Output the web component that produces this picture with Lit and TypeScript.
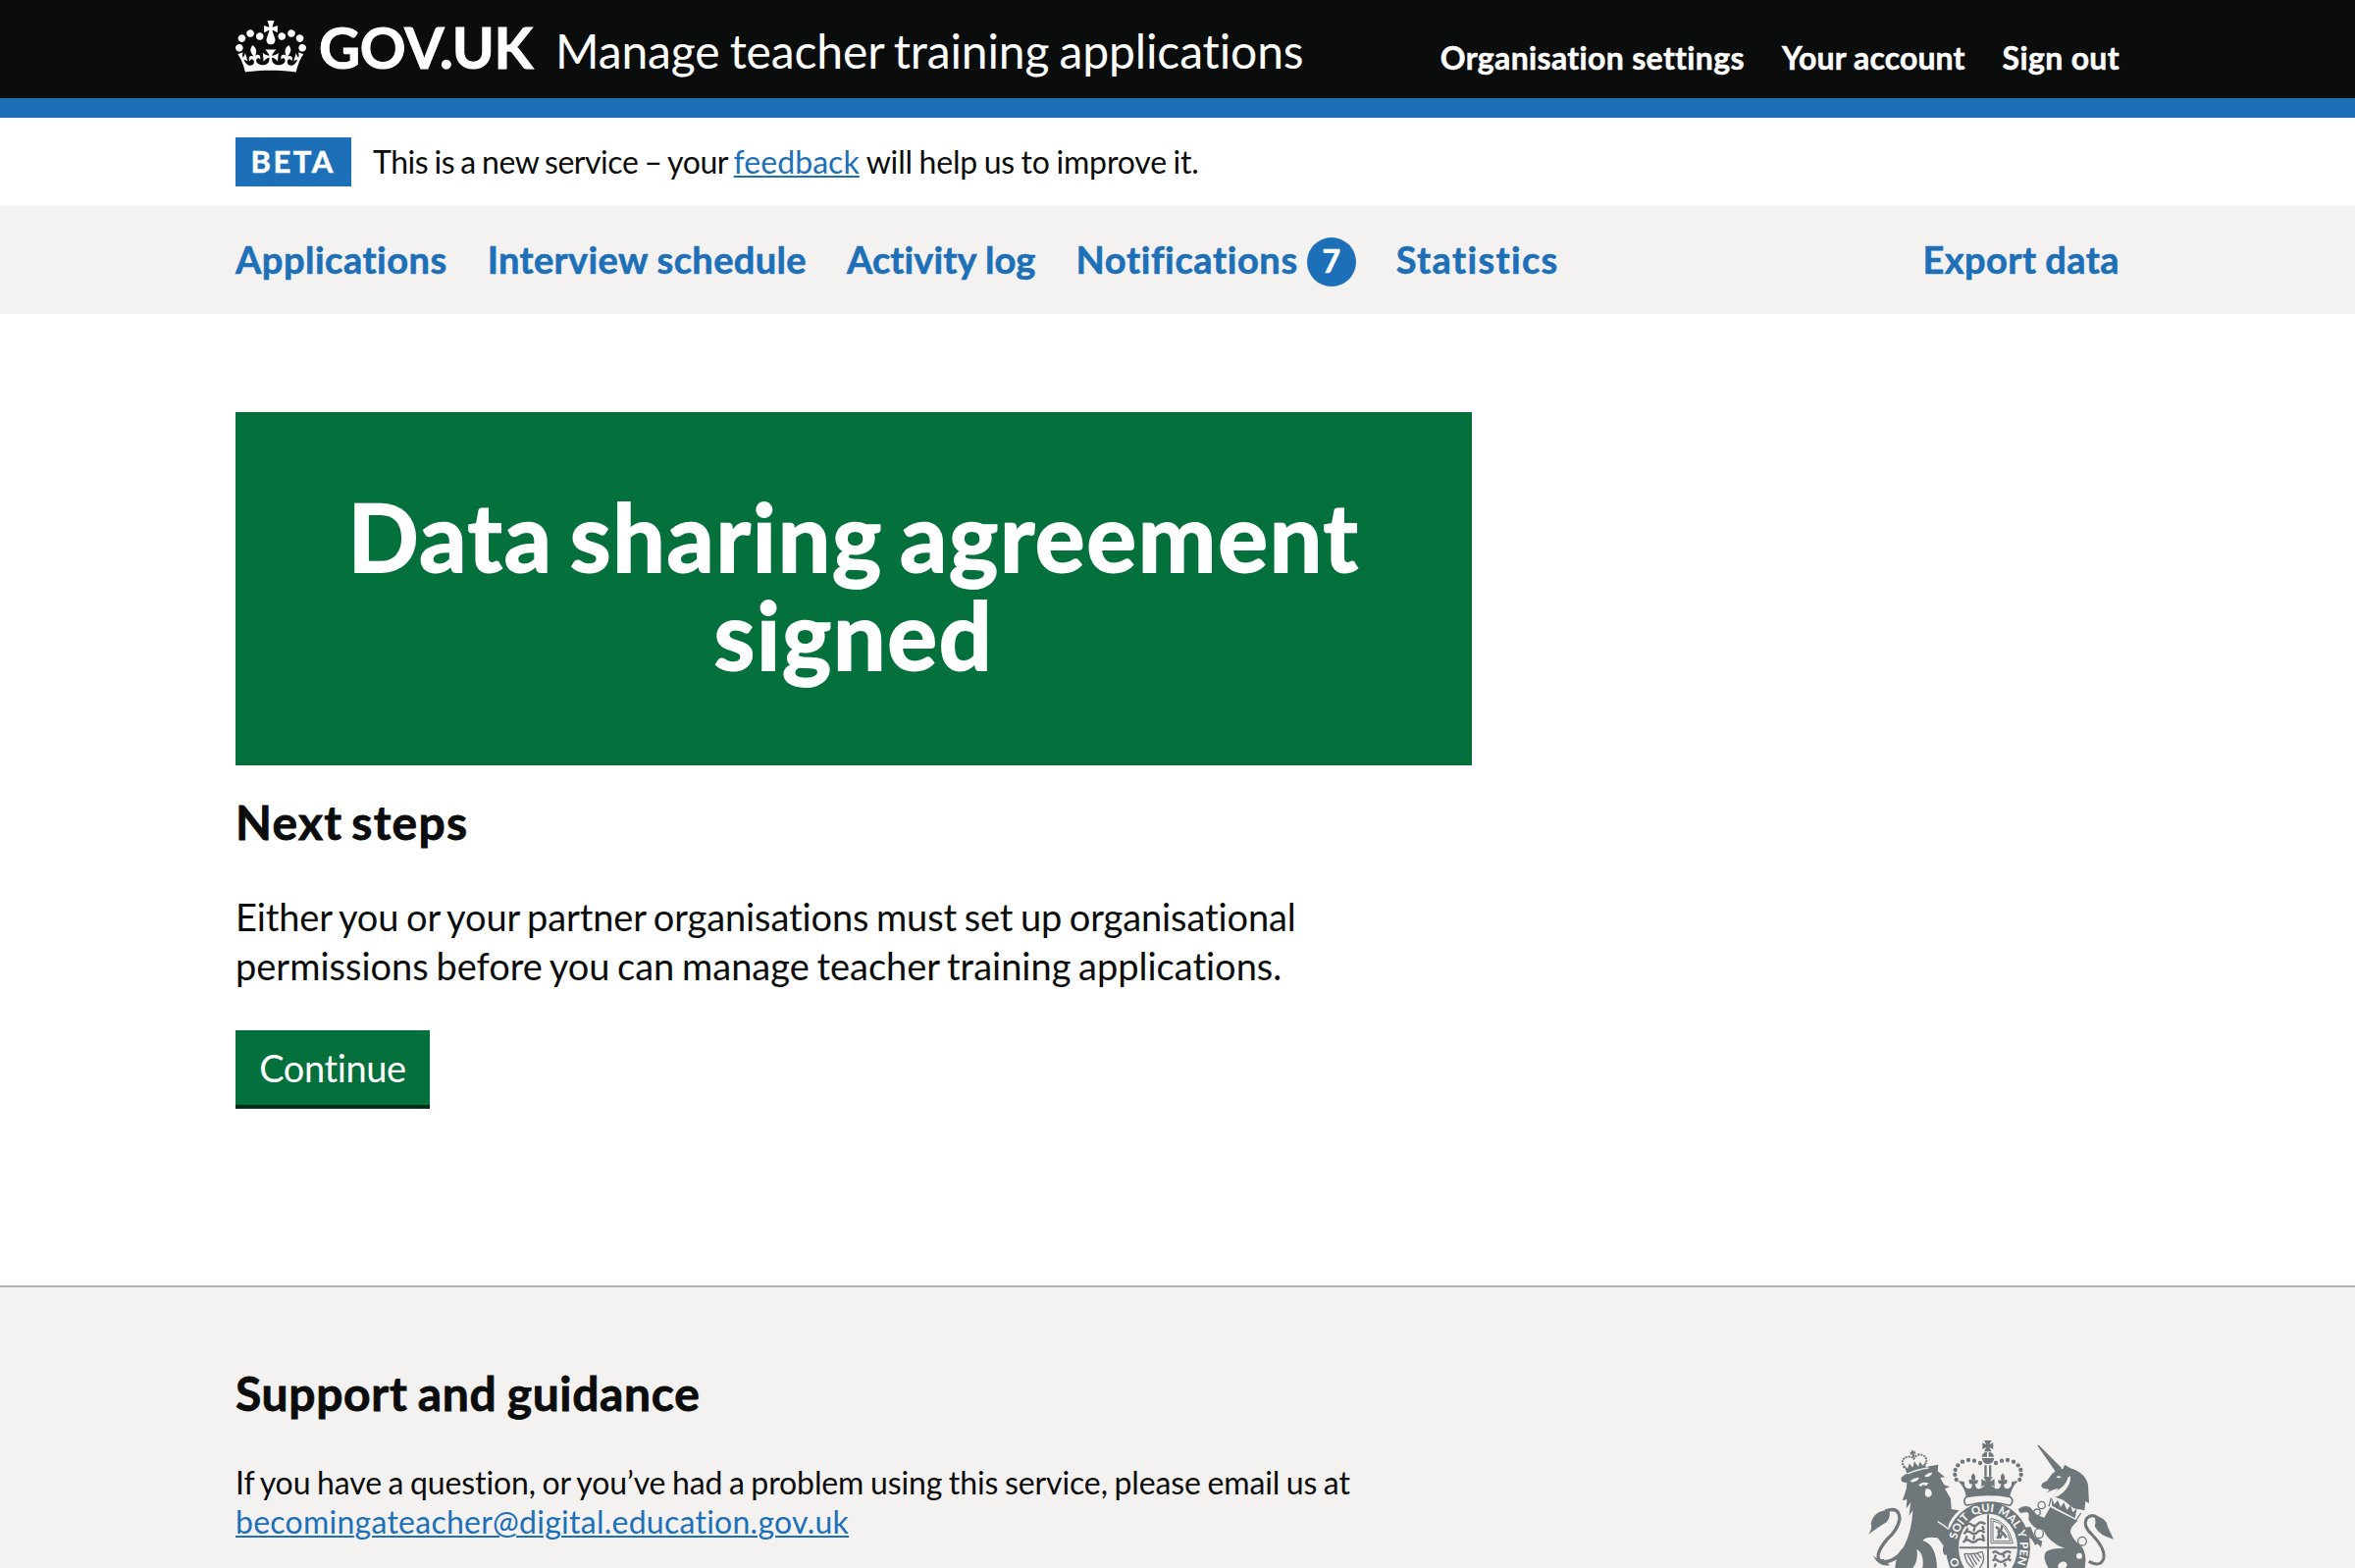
import { LitElement, html, css, svg } from 'lit';
import { customElement, property } from 'lit/decorators.js';

@customElement('crown-logo')
class CrownLogo extends LitElement {
  static styles = css`
    :host { display: block; width: 72px; height: 53px; }
    .crown { display: block; width: 100%; height: 100%; fill: #fff; }
  `;
  render() {
    return html`<svg class="crown" viewBox="0 0 132 97" aria-hidden="true"><path fill-rule="evenodd" d="M25 30.2c3.5 1.5 7.7-.2 9.1-3.7 1.5-3.6-.2-7.8-3.9-9.2-3.6-1.4-7.6.3-9.1 3.9-1.4 3.5.3 7.5 3.9 9zM9 39.5c3.6 1.5 7.8-.2 9.2-3.7 1.5-3.6-.2-7.8-3.9-9.1-3.6-1.5-7.6.2-9.1 3.8-1.4 3.5.3 7.5 3.8 9zM4.4 57.2c3.5 1.5 7.7-.2 9.1-3.8 1.5-3.6-.2-7.7-3.9-9.1-3.5-1.5-7.6.3-9.1 3.8-1.4 3.5.3 7.6 3.9 9.1zm38.3-21.4c3.5 1.5 7.7-.2 9.1-3.8 1.5-3.6-.2-7.7-3.9-9.1-3.6-1.5-7.6.3-9.1 3.8-1.3 3.6.4 7.7 3.9 9.1zm64.4-5.6c-3.6 1.5-7.8-.2-9.1-3.7-1.5-3.6.2-7.8 3.8-9.2 3.6-1.4 7.7.3 9.2 3.9 1.3 3.5-.4 7.5-3.9 9zm15.9 9.3c-3.6 1.5-7.7-.2-9.1-3.7-1.5-3.6.2-7.8 3.7-9.1 3.6-1.5 7.7.2 9.2 3.8 1.5 3.5-.3 7.5-3.8 9zm4.7 17.7c-3.6 1.5-7.8-.2-9.2-3.8-1.5-3.6.2-7.7 3.9-9.1 3.6-1.5 7.7.3 9.2 3.8 1.3 3.5-.4 7.6-3.9 9.1zM89.3 35.8c-3.6 1.5-7.8-.2-9.2-3.8-1.4-3.6.2-7.7 3.9-9.1 3.6-1.5 7.7.3 9.2 3.8 1.4 3.6-.3 7.7-3.9 9.1zM69.7 17.7l8.9 4.7V9.3l-8.9 2.8c-.2-.3-.5-.6-.9-.9L72.4 0H59.6l3.5 11.2c-.3.3-.6.5-.9.9l-8.8-2.8v13.1l8.8-4.7c.3.3.6.7.9.9l-5 15.4v.1c-.2.8-.4 1.6-.4 2.4 0 4.1 3.1 7.5 7 8.1h.2c.3 0 .7.1 1 .1.4 0 .7 0 1-.1h.2c4-.6 7.1-4.1 7.1-8.1 0-.8-.1-1.7-.4-2.4V34l-5.1-15.4c.4-.2.7-.6 1-.9zM66 92.8c16.9 0 32.8 1.1 47.1 3.2 4-16.9 8.9-26.7 14-33.5l-9.6-3.4c1 4.9 1.1 7.2 0 10.2-1.5-1.4-3-4.3-4.2-8.7L108.6 76c2.8-2 5-3.2 7.5-3.3-4.4 9.4-10 11.9-13.6 11.2-4.3-.8-6.3-4.6-5.6-7.9 1-4.7 5.7-5.9 8-.5 4.3-8.7-3-11.4-7.6-8.8 7.1-7.2 7.9-13.5 2.1-21.1-8 6.1-8.1 12.3-4.5 20.8-4.7-5.4-12.1-2.5-9.5 6.2 3.4-5.2 7.9-2 7.2 3.1-.6 4.3-6.4 7.8-13.5 7.2-10.3-.9-10.9-8-11.2-13.8 2.5-.5 7.1 1.8 11 7.3L80.2 60c-4.1 4.4-8 5.3-12.3 5.4 1.4-4.4 8-11.6 8-11.6H55.5s6.4 7.2 7.9 11.6c-4.2-.1-8-1-12.3-5.4l1.4 16.4c3.9-5.5 8.5-7.7 10.9-7.3-.3 5.8-.9 12.8-11.1 13.8-7.2.6-12.9-2.9-13.5-7.2-.7-5 3.8-8.3 7.1-3.1 2.7-8.7-4.6-11.6-9.4-6.2 3.7-8.5 3.6-14.7-4.6-20.8-5.8 7.6-5 13.9 2.2 21.1-4.7-2.6-11.9.1-7.7 8.8 2.3-5.5 7.1-4.2 8.1.5.7 3.3-1.3 7.1-5.7 7.9-3.5.7-9-1.8-13.5-11.2 2.5.1 4.7 1.3 7.5 3.3l-4.7-15.4c-1.2 4.4-2.7 7.2-4.3 8.7-1.1-3-.9-5.3 0-10.2l-9.5 3.4c5 6.9 9.9 16.7 14 33.5 14.8-2.1 30.8-3.2 47.7-3.2z"/></svg>`;
  }
}

/** Left half of the crown's pearls; the right half is mirrored about x = 438. */
const PEARLS = [[414, 123], [396, 116], [378, 114], [360, 119], [346, 130], [338, 144], [337, 159], [341, 174]];

/** Words of the garter motto and where each starts along the ring. */
const MOTTO: [string, number][] = [['O', 10], ['SOIT', 90], ['QUI', 181], ['MAL', 257], ['Y', 341], ['PEN', 374]];

@customElement('royal-arms')
class RoyalArms extends LitElement {
  static styles = css`
    :host { display: block; width: 260px; height: 148px; }
    .arms { display: block; width: 100%; height: 100%; }
    .ink { fill: #6f777b; stroke-linejoin: round; }
    .pale { fill: #f3f2f1; }
    .line { fill: none; stroke: #6f777b; }
    .motto { fill: #f3f2f1; font: 900 34px Lato, sans-serif; letter-spacing: 0.3px; }
  `;
  render() {
    return html`<svg class="arms" viewBox="60 0 780 444" aria-hidden="true">
<g class="ink">
<path d="M588 68 L594 69 L663 138 L649 156 Z"/>
<path d="M601 194 Q601 184 618 178 L634 156 Q648 142 668 140 L672 128 L690 139 Q735 152 744 190 L747 246 L736 240 L733 268 L700 262 L668 236 L640 226 L652 200 L630 208 L618 214 L626 204 L606 200Z"/>
<path class="pale" d="M690 162 Q692 190 668 212 Q652 226 640 228 Q640 218 650 206 Q676 194 682 168Z"/>
<path class="pale" d="M646 166 q8 -6 16 0 q-6 6 -16 0z"/>
<path d="M632 228 L641 250 L651 236 L660 258 L670 244 L679 267 L690 252 L697 274 L710 262 L704 292 L634 254Z"/>
<path class="line" stroke-width="4" d="M631 230 L624 256 M722 276 L706 300"/>
<path d="M628 258 L712 300 Q690 318 690 334 Q698 360 722 376 Q742 400 734 444 L676 444 Q686 428 668 424 Q650 428 652 444 L622 444 Q602 408 616 394 Q632 382 672 384 Q624 366 606 326 Q580 330 562 296 Q566 268 552 274 L536 276 L530 264 Q548 250 566 258 L588 282 L610 290Z"/>
<path d="M552 320 L568 318 L582 350 L604 362 L600 382 L590 370 L582 374 L572 356 L556 346 L540 352Z"/>
<g class="line" stroke-width="4"><circle cx="602" cy="252" r="11"/><circle cx="588" cy="274" r="10"/><ellipse cx="594" cy="338" rx="13" ry="15"/><circle cx="726" cy="362" r="13"/></g>
<circle class="pale" cx="717" cy="407" r="9"/>
<path class="line" stroke-width="9" d="M776 292 Q756 276 740 292 Q726 316 758 344 Q796 384 792 412 Q784 444 746 424"/>
<path d="M762 284 Q800 288 804 318 L822 356 Q778 346 764 316 Q770 300 762 284Z"/>
<path class="line" stroke-width="10" d="M124 270 Q166 254 168 294 Q162 328 128 358 Q92 402 106 420 Q134 436 172 400"/>
<path d="M72 342 Q86 322 80 308 Q88 268 136 266 Q142 286 128 304 Q104 318 72 342Z M86 406 Q100 420 118 416 L138 436 Q104 442 86 406Z"/>
<path d="M172 168 L184 158 Q220 142 262 132 L286 128 L284 148 L306 166 L292 168 L304 190 L321 196 L306 202 L324 232 L326 264 L350 268 Q322 292 316 318 L338 356 Q350 380 343 410 L330 404 L326 412 L316 398 L306 406 Q296 396 302 376 L284 352 Q250 346 238 360 Q280 372 282 444 L238 444 Q244 400 220 386 Q226 420 208 444 L154 444 Q156 400 180 380 Q206 330 208 268 L196 284 L202 244 L188 262 L190 234 L176 238 L188 204 L190 184 L174 180Z"/>
<path class="pale" d="M200 178 Q214 166 228 168 Q222 180 206 182Z M244 162 Q254 152 268 152 Q264 164 248 166Z M226 190 Q236 178 256 184 L250 192 L238 190 L232 196Z M248 202 Q268 200 266 220 Q256 234 246 222 Q244 212 248 202Z"/>
<path fill="none" stroke="#f3f2f1" stroke-width="4" d="M284 302 Q304 314 318 326"/>
<g transform="rotate(-10 213 120)"><path d="M184 149 L180 124 L189 136 L197 122 L205 136 L213 118 L222 136 L230 122 L237 136 L247 124 L243 149Z M208 84 h10 l-3 6 6 -3 v10 l-6 -3 3 10 h-10 l3 -10 -6 3 v-10 l6 3z"/><path class="line" stroke-width="6" stroke-dasharray="6 3" d="M180 132 Q168 104 196 100 Q208 102 213 110 Q218 102 230 100 Q258 104 247 132"/></g>
<path fill="none" stroke="#f3f2f1" stroke-width="4" d="M192 156 Q222 142 256 138"/>
<path d="M426 54 h23 l-7 13 12 -6 v20 l-12 -6 7 13 h-23 l7 -13 -12 6 v-20 l12 6z"/>
<path d="M419 104 a19 16 0 0 1 16 -15 v15z M440 89 a19 16 0 0 1 16 15 h-16z M419 108 h38 q-4 18 -19 18 q-15 0 -19 -18z M427 130 h7 v34 h-7z M441 130 h7 v34 h-7z"/>
${PEARLS.map(([x, y]) => svg`<circle cx=${x} cy=${y} r="6.5"/><circle cx=${876 - x} cy=${y} r="6.5"/>`)}
<path d="M372 228 Q366 196 346 178 L366 180 Q364 198 378 202 Q392 202 388 186 Q378 190 380 174 Q386 172 390 178 Q382 166 393 154 Q404 166 396 178 Q402 172 408 176 Q406 190 398 186 Q400 204 412 202 Q424 198 430 190 L418 196 V172 L432 180 L424 165 H452 L444 180 L458 172 V196 L446 190 Q452 198 464 202 Q476 204 478 186 Q470 190 468 176 Q474 172 480 178 Q472 166 483 154 Q494 166 486 178 Q490 172 496 174 Q498 190 488 186 Q484 202 498 202 Q512 198 510 180 L530 178 Q510 196 504 228 Q438 216 372 228Z"/>
<ellipse cx="438" cy="382" rx="129" ry="140"/>
<path class="pale" stroke="#6f777b" stroke-width="5" d="M372 226 Q438 214 504 226 Q514 232 512 242 Q508 254 500 252 Q438 234 376 252 Q368 254 366 242 Q364 232 372 226Z"/>
<ellipse class="pale" cx="438" cy="382" rx="90" ry="104"/>
<path class="line" stroke-width="6" d="M438 280 V444 M350 382 H527"/>
<path id="ring" fill="none" d="M357 444 A98 110 0 1 1 519 444"/>
${MOTTO.map(([word, at]) => svg`<text class="motto"><textPath href="#ring" startOffset=${at}>${word}</textPath></text>`)}
<g class="line" stroke-width="7"><path d="M370 316 q8 -14 18 -4 q10 8 20 -4 q10 -8 22 2 M364 340 q10 -14 22 -4 q12 8 22 -4 q10 -6 20 4 M362 366 q10 -14 22 -4 q12 8 22 -4 q10 -6 22 4 M376 322 l-6 12 M398 318 l-4 14 M420 316 l6 12 M374 346 l-6 14 M396 344 l-2 14 M420 342 l6 14"/>
<path d="M452 398 q8 -8 16 0 q10 8 22 -2 q10 -6 18 2 M452 422 q8 -8 16 0 q10 8 22 -2 q10 -6 18 2 M462 404 l-4 10 M484 402 l4 10 M504 404 l-4 12 M462 430 l-4 12 M488 428 l4 12"/>
<path stroke-width="3" d="M447 292 Q500 300 514 368 H447Z M453 300 Q496 308 506 362 H453Z"/>
<path d="M466 354 q8 -12 4 -22 q12 -4 10 -18 M470 330 q16 4 24 22 M480 340 l-6 14 M462 318 l10 8"/>
<path stroke-width="4" d="M366 400 Q396 404 420 394 Q432 420 412 444 M366 400 Q370 430 392 444 M376 404 L396 440 M386 404 L404 434 M396 402 L412 424 M406 400 L418 414"/></g>
</g></svg>`;
  }
}

@customElement('service-header')
class ServiceHeader extends LitElement {
  static styles = css`
    :host { display: block; background: #0b0c0c; border-bottom: 20px solid #1d70b8; color: #fff; }
    .bar { box-sizing: border-box; width: 1920px; height: 100px; margin: 0 auto; display: flex; align-items: flex-start; white-space: nowrap; }
    .crown { padding-top: 21px; }
    .brand { padding: 18px 0 0 13px; font-size: 58px; line-height: 60px; font-weight: 700; letter-spacing: -0.24px; -webkit-text-stroke: 1px currentColor; }
    .service { padding: 22px 0 0 23px; font-size: 48px; line-height: 60px; letter-spacing: -0.13px; word-spacing: -2px; }
    .links { margin-left: auto; padding-top: 39px; display: flex; gap: 38px; font-size: 32px; line-height: 40px; font-weight: 700; letter-spacing: 0.34px; -webkit-text-stroke: 0.5px currentColor; }
    .account { letter-spacing: 0.12px; }
  `;
  render() {
    return html`<div class="bar">
      <crown-logo class="crown"></crown-logo>
      <div class="brand">GOV.UK</div>
      <div class="service">Manage teacher training applications</div>
      <nav class="links"><span>Organisation settings</span><span class="account">Your account</span><span>Sign out</span></nav>
    </div>`;
  }
}

@customElement('phase-banner')
class PhaseBanner extends LitElement {
  static styles = css`
    :host { display: block; background: #fff; }
    .row { box-sizing: border-box; width: 1920px; height: 90px; margin: 0 auto; padding-top: 20px; display: flex; align-items: flex-start; gap: 22px; white-space: nowrap; }
    .tag { box-sizing: border-box; width: 118px; height: 50px; padding-left: 15.6px; background: #1d70b8; color: #fff; font-size: 31px; line-height: 49px; font-weight: 700; letter-spacing: 2.5px; -webkit-text-stroke: 0.5px currentColor; }
    .text { padding-top: 5px; font-size: 32px; line-height: 40px; letter-spacing: -0.45px; word-spacing: -1.5px; }
    .link { color: #1d70b8; letter-spacing: 0.05px; text-decoration: underline 2px; text-underline-offset: 2px; }
    .rest { letter-spacing: -0.15px; margin-left: 1px; }
  `;
  render() {
    return html`<div class="row">
      <strong class="tag">BETA</strong>
      <div class="text">This is a new service – your <a class="link">feedback</a><span class="rest"> will help us to improve it.</span></div>
    </div>`;
  }
}

@customElement('primary-nav')
class PrimaryNav extends LitElement {
  @property({ type: Number }) count = 7;
  static styles = css`
    :host { display: block; background: #f3f2f1; }
    .row { box-sizing: border-box; width: 1920px; height: 110px; margin: 0 auto; padding-top: 29px; display: flex; align-items: flex-start; gap: 41px; color: #1d70b8; font-size: 38px; line-height: 50px; font-weight: 700; white-space: nowrap; letter-spacing: 0.5px; -webkit-text-stroke: 0.6px currentColor; }
    .even { letter-spacing: 0.36px; }
    .tight { letter-spacing: 0.1px; }
    .alerts { display: flex; gap: 9px; letter-spacing: 0.607px; }
    .badge { box-sizing: border-box; width: 50px; height: 50px; margin-top: 3px; border-radius: 50%; background: #1d70b8; color: #fff; font-size: 32px; line-height: 48px; text-align: center; letter-spacing: 0; }
    .wide { letter-spacing: 1.35px; }
    .end { margin-left: auto; letter-spacing: 0.45px; word-spacing: -1px; }
  `;
  render() {
    return html`<nav class="row">
      <span>Applications</span><span class="even">Interview schedule</span><span class="tight">Activity log</span>
      <span class="alerts">Notifications<span class="badge">${this.count}</span></span>
      <span class="wide">Statistics</span><span class="end">Export data</span>
    </nav>`;
  }
}

@customElement('support-footer')
class SupportFooter extends LitElement {
  static styles = css`
    :host { display: block; box-sizing: border-box; background: #f3f2f1; border-top: 2px solid #b1b4b6; }
    .row { width: 1920px; margin: 0 auto; display: flex; justify-content: space-between; align-items: flex-start; white-space: nowrap; }
    .title { margin: 78px 0 41px; font-size: 48px; line-height: 60px; font-weight: 700; letter-spacing: 0.65px; word-spacing: -2px; -webkit-text-stroke: 0.8px currentColor; }
    .text { margin: 0; font-size: 32px; line-height: 40px; letter-spacing: -0.105px; word-spacing: -1.5px; }
    .link { color: #1d70b8; letter-spacing: 0.254px; text-decoration: underline 2px; text-underline-offset: 2px; }
    .crest { margin-top: 138px; }
  `;
  render() {
    return html`<div class="row">
      <div>
        <h2 class="title">Support and guidance</h2>
        <p class="text">If you have a question, or you’ve had a problem using this service, please email us at<br><a class="link">becomingateacher@digital.education.gov.uk</a></p>
      </div>
      <royal-arms class="crest"></royal-arms>
    </div>`;
  }
}

@customElement('app-root')
class AppRoot extends LitElement {
  static styles = css`
    :host { display: flex; flex-direction: column; width: 2400px; height: 1598px; overflow: hidden; background: #fff; color: #0b0c0c; font-family: Lato, "Liberation Sans", sans-serif; font-variant-ligatures: none; }
    .main { box-sizing: border-box; width: 1920px; height: 990px; margin: 0 auto; padding-top: 100px; }
    .panel { box-sizing: border-box; width: 1260px; height: 360px; padding: 76px 70px 0; background: #04703c; color: #fff; text-align: center; }
    .title { margin: 0; font-size: 95px; line-height: 100px; font-weight: 700; letter-spacing: 1.8px; word-spacing: -8px; -webkit-text-stroke: 1.8px currentColor; }
    .next { margin: 28px 0 41px; font-size: 48px; line-height: 60px; font-weight: 700; letter-spacing: 1.25px; word-spacing: -4px; -webkit-text-stroke: 0.8px currentColor; }
    .body { margin: 0; font-size: 38px; line-height: 50px; letter-spacing: -0.11px; word-spacing: -2px; white-space: nowrap; }
    .second { letter-spacing: -0.01px; }
    .button { box-sizing: border-box; display: block; width: 198px; height: 76px; margin-top: 41px; padding: 0; border: 0; background: #04703c; box-shadow: 0 4px 0 #002d18; color: #fff; font: 38px/76px Lato, sans-serif; letter-spacing: -0.384px; text-align: center; }
    .footer { flex: 1; }
  `;
  render() {
    return html`
      <service-header></service-header>
      <phase-banner></phase-banner>
      <primary-nav .count=${7}></primary-nav>
      <main class="main">
        <section class="panel"><h1 class="title">Data sharing agreement signed</h1></section>
        <h2 class="next">Next steps</h2>
        <p class="body">Either you or your partner organisations must set up organisational<br><span class="second">permissions before you can manage teacher training applications.</span></p>
        <button class="button">Continue</button>
      </main>
      <support-footer class="footer"></support-footer>`;
  }
}
